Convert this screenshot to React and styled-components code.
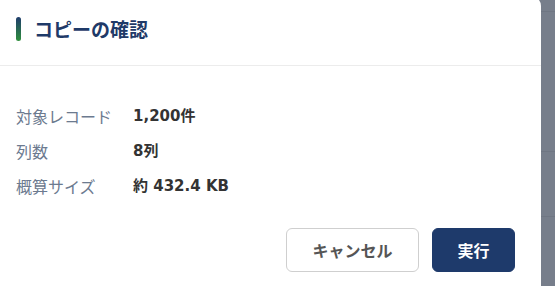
import React from "react";
import styled, { createGlobalStyle } from "styled-components";

const GlobalStyle = createGlobalStyle`
  html, body {
    margin: 0;
    padding: 0;
    height: 100%;
  }
  body {
    font-family: "Noto Sans CJK JP", "Noto Sans", sans-serif;
    background-color: #777e8b;
    background-image:
      linear-gradient(#6f7683, #6f7683),
      linear-gradient(#6f7683, #6f7683),
      linear-gradient(#6f7683, #6f7683);
    background-repeat: no-repeat;
    background-size: 100% 1px;
    background-position: 0 11px, 0 151px, 0 216px;
    overflow: hidden;
  }
`;

const rows = [
  { label: "対象レコード", value: "1,200件" },
  { label: "列数", value: "8列" },
  { label: "概算サイズ", value: "約 432.4 KB" },
];

const Dialog = styled.div`
  width: 541px;
  margin-top: -4px;
  background: #ffffff;
  border-radius: 0 10px 10px 0;
  box-sizing: border-box;
  min-height: 310px;
`;

const Header = styled.div`
  display: flex;
  align-items: center;
  gap: 13px;
  padding: 21px 16px 24px;
  border-bottom: 1px solid #ececec;
`;

const AccentBar = styled.span`
  width: 5px;
  height: 24px;
  border-radius: 3px;
  background: linear-gradient(to bottom, #1f3b6c, #2f8f3c);
`;

const Title = styled.h2`
  margin: 0;
  font-size: 19px;
  line-height: 24px;
  font-weight: 700;
  color: #1f3a68;
`;

const Body = styled.div`
  display: grid;
  grid-template-columns: 117px auto;
  row-gap: 11px;
  padding: 38px 16px 30px;
`;

const Label = styled.span`
  font-size: 16px;
  line-height: 24px;
  color: #6c7a8f;
`;

const Value = styled.span`
  font-family: "DejaVu Sans", "Noto Sans CJK JP", sans-serif;
  font-size: 15px;
  line-height: 24px;
  font-weight: 700;
  color: #333333;
`;

const Footer = styled.div`
  display: flex;
  justify-content: flex-end;
  gap: 13px;
  padding: 0 26px;
`;

const Button = styled.button`
  height: 44px;
  width: ${(p) => p.$width}px;
  box-sizing: border-box;
  border-radius: 6px;
  font-family: inherit;
  font-size: 16px;
  font-weight: 700;
  cursor: pointer;
  border: 1px solid ${(p) => (p.$primary ? "#1e3a6b" : "#cfcfcf")};
  background: ${(p) => (p.$primary ? "#1e3a6b" : "#ffffff")};
  color: ${(p) => (p.$primary ? "#ffffff" : "#555555")};
`;

export default function App() {
  return (
    <>
      <GlobalStyle />
      <Dialog>
        <Header>
          <AccentBar />
          <Title>コピーの確認</Title>
        </Header>
        <Body>
          {rows.map((r) => (
            <React.Fragment key={r.label}>
              <Label>{r.label}</Label>
              <Value>{r.value}</Value>
            </React.Fragment>
          ))}
        </Body>
        <Footer>
          <Button $width={133}>キャンセル</Button>
          <Button $width={83} $primary>
            実行
          </Button>
        </Footer>
      </Dialog>
    </>
  );
}
